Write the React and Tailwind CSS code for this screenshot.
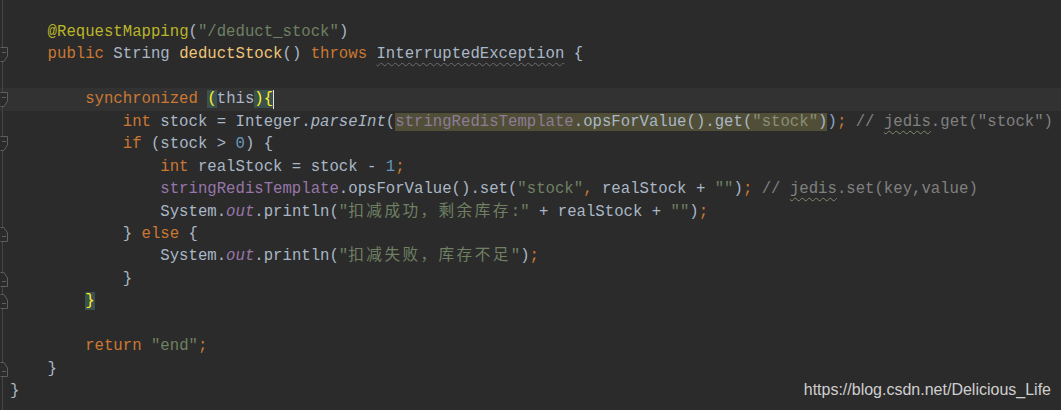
import React from 'react';

const kw = 'text-[#cc7832]';
const ann = 'text-[#bbb529]';
const str = 'text-[#6f8063]';
const fn = 'text-[#f0c477]';
const fld = 'text-[#9876aa]';
const num = 'text-[#6897bb]';
const cm = 'text-[#808080]';
const wavy = 'underline decoration-wavy decoration-[#7d8a6e] underline-offset-[4px] decoration-1';
const match = 'bg-[#3b514d] text-[#ffef28]';
const cjk = 'tracking-[2.4px]';

const Fold = ({ kind }) => {
  if (!kind) return null;
  if (kind === 'open') {
    return (
      <svg width="9" height="18" viewBox="0 0 9 18" className="-ml-[3px]">
        <path d="M0.5 1.5 H7.5 V10 L4 15.5 H0.5" fill="#2b2b2b" stroke="#5e5e5e" strokeWidth="1" />
        <path d="M2 6.5 H6" stroke="#5e5e5e" strokeWidth="1" />
      </svg>
    );
  }
  return (
    <svg width="9" height="18" viewBox="0 0 9 18" className="-ml-[3px]">
      <path d="M0.5 16.5 H7.5 V8 L4 2.5 H0.5" fill="#2b2b2b" stroke="#5e5e5e" strokeWidth="1" />
      <path d="M2 11.5 H6" stroke="#5e5e5e" strokeWidth="1" />
    </svg>
  );
};

const Line = ({ fold, current, children }) => (
  <div className={`flex h-[22.45px] items-center ${current ? 'bg-[#323232]' : ''}`}>
    <div className="w-[8px] ml-[2px] h-full shrink-0 border-l border-[#464646] flex items-center">
      <Fold kind={fold} />
    </div>
    <div className="whitespace-pre text-[#a9b7c6]">{children}</div>
  </div>
);

export default function App() {
  return (
    <div className="relative w-[1061px] h-[410px] bg-[#2b2b2b] overflow-hidden font-['Liberation_Mono','Noto_Sans_CJK_SC',monospace] text-[15.67px] leading-[22.45px]">
      <div className="flex flex-col">
        <div className="flex h-[21px]">
          <div className="w-[8px] ml-[2px] h-full border-l border-[#464646]" />
        </div>
        <Line>
          {'    '}<span className={ann}>@RequestMapping</span>(<span className={str}>"/deduct_stock"</span>)
        </Line>
        <Line fold="open">
          {'    '}<span className={kw}>public</span> String <span className={fn}>deductStock</span>() <span className={kw}>throws</span> <span className={`underline decoration-wavy decoration-[#6e6e6e] underline-offset-[4px] decoration-1`}>InterruptedException</span> {'{'}
        </Line>
        <Line />
        <Line fold="open" current>
          {'        '}<span className={kw}>synchronized</span> <span className={match}>(</span>this<span className={match}>)</span><span className={match}>{'{'}</span><span className="inline-block w-px h-[19px] align-middle bg-[#e0e0e0]" />
        </Line>
        <Line>
          {'            '}<span className={kw}>int</span> stock = Integer.<span className="italic">parseInt</span>(<span className="bg-[#504e37]"><span className="text-[#8c7c96]">stringRedisTemplate</span>.opsForValue().get(<span className="text-[#8a8f78]">"stock"</span>)</span><span className="text-[#8fa3c8]">)</span><span className={kw}>;</span> <span className={cm}>// <span className={wavy}>jedis</span>.get("stock")</span>
        </Line>
        <Line fold="open">
          {'            '}<span className={kw}>if</span> (stock &gt; <span className={num}>0</span>) {'{'}
        </Line>
        <Line>
          {'                '}<span className={kw}>int</span> realStock = stock - <span className={num}>1</span><span className={kw}>;</span>
        </Line>
        <Line>
          {'                '}<span className={fld}>stringRedisTemplate</span>.opsForValue().set(<span className={str}>"stock"</span><span className={kw}>,</span> realStock + <span className={str}>""</span>)<span className={kw}>;</span> <span className={cm}>// <span className={wavy}>jedis</span>.set(key,value)</span>
        </Line>
        <Line>
          {'                '}System.<span className={`${fld} italic`}>out</span>.println(<span className={str}>"<span className={cjk}>扣减成功，剩余库存</span>:"</span> + realStock + <span className={str}>""</span>)<span className={kw}>;</span>
        </Line>
        <Line fold="close">
          {'            '}{'}'} <span className={kw}>else</span> {'{'}
        </Line>
        <Line>
          {'                '}System.<span className={`${fld} italic`}>out</span>.println(<span className={str}>"<span className={cjk}>扣减失败，库存不足</span>"</span>)<span className={kw}>;</span>
        </Line>
        <Line fold="close">
          {'            '}{'}'}
        </Line>
        <Line fold="close">
          {'        '}<span className={match}>{'}'}</span>
        </Line>
        <Line />
        <Line>
          {'        '}<span className={kw}>return</span> <span className={str}>"end"</span><span className={kw}>;</span>
        </Line>
        <Line fold="close">
          {'    '}{'}'}
        </Line>
        <Line>
          {'}'}
        </Line>
        <div className="flex h-[20px]">
          <div className="w-[8px] ml-[2px] h-full border-l border-[#464646]" />
        </div>
      </div>

      {/* csdn watermark */}
      <div className="absolute right-[10px] bottom-[9px] font-['Liberation_Sans',Arial,sans-serif] text-[16px] text-[#cfcfcf]">
        https://blog.csdn.net/Delicious_Life
      </div>
    </div>
  );
}
